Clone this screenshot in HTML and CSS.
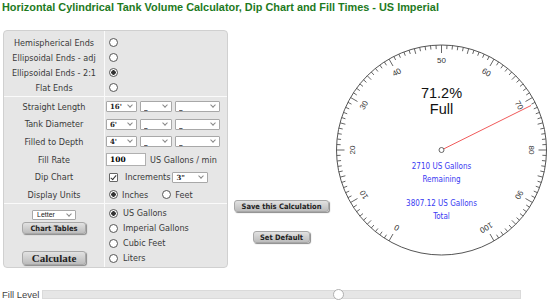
FILE: index.html
```html
<!DOCTYPE html>
<html lang="en">

<head>
    <meta charset="UTF-8">
    <title>Horizontal Cylindrical Tank Volume Calculator</title>
    <link rel="stylesheet" href="styles.css">
</head>

<body>

    <h1 class="title">Horizontal Cylindrical Tank Volume Calculator, Dip Chart and Fill Times - US Imperial</h1>

    <div class="main">
        <div class="panel">
            <div class="section ends">
                <div class="lbl">Hemispherical Ends</div>
                <div class="val"><input type="radio" name="ends"></div>
                <div class="lbl">Ellipsoidal Ends - adj</div>
                <div class="val"><input type="radio" name="ends"></div>
                <div class="lbl">Ellipsoidal Ends - 2:1</div>
                <div class="val"><input type="radio" name="ends" checked></div>
                <div class="lbl">Flat Ends</div>
                <div class="val"><input type="radio" name="ends"></div>
            </div>

            <div class="section dims">
                <div class="lbl">Straight Length</div>
                <div class="val">
                    <span class="sel sel-ft"><select><option>16'</option></select></span>
                    <span class="sel sel-in"><select><option>_</option></select></span>
                    <span class="sel sel-fr"><select><option>_</option></select></span>
                </div>
                <div class="lbl">Tank Diameter</div>
                <div class="val">
                    <span class="sel sel-ft"><select><option>6'</option></select></span>
                    <span class="sel sel-in"><select><option>_</option></select></span>
                    <span class="sel sel-fr"><select><option>_</option></select></span>
                </div>
                <div class="lbl">Filled to Depth</div>
                <div class="val">
                    <span class="sel sel-ft"><select><option>4'</option></select></span>
                    <span class="sel sel-in"><select><option>_</option></select></span>
                    <span class="sel sel-fr"><select><option>_</option></select></span>
                </div>
                <div class="lbl">Fill Rate</div>
                <div class="val">
                    <input type="text" class="rate" value="100">
                    <span class="unit">US Gallons / min</span>
                </div>
                <div class="lbl">Dip Chart</div>
                <div class="val">
                    <input type="checkbox" checked>
                    <span class="incr">Increments</span>
                    <span class="sel sel-inc"><select><option>3"</option></select></span>
                </div>
                <div class="lbl">Display Units</div>
                <div class="val">
                    <input type="radio" name="disp" checked><span class="opt">Inches</span>
                    <input type="radio" name="disp" class="gap"><span class="opt">Feet</span>
                </div>
            </div>

            <div class="section units">
                <div class="lbl actions">
                    <span class="sel sel-paper"><select><option>Letter</option></select></span>
                    <button class="btn btn-chart">Chart Tables</button>
                    <button class="btn btn-calc">Calculate</button>
                </div>
                <div class="val list">
                    <label><input type="radio" name="vol" checked>US Gallons</label>
                    <label><input type="radio" name="vol">Imperial Gallons</label>
                    <label><input type="radio" name="vol">Cubic Feet</label>
                    <label><input type="radio" name="vol">Liters</label>
                </div>
            </div>
        </div>

        <div class="middle">
            <button class="btn btn-save">Save this Calculation</button>
            <button class="btn btn-default">Set Default</button>
        </div>

        <svg class="gauge" width="215" height="240" viewBox="0 0 215 240">
            <circle cx="106.5" cy="122" r="105" fill="none" stroke="#555" stroke-width="1"></circle>
            <g id="ticks" stroke="#555" stroke-width="0.9"></g>
            <g id="labels" class="gauge-num"></g>
            <text x="106.5" y="69.5" class="gauge-big">71.2%</text>
            <text x="106.5" y="86" class="gauge-big">Full</text>
            <line id="needle" x1="106.5" y1="122" x2="196" y2="77.5" stroke="#f05a5a" stroke-width="1"></line>
            <circle cx="106.5" cy="122" r="2.5" fill="#fff" stroke="#555" stroke-width="0.9"></circle>
            <text x="106.5" y="141" class="gauge-info">2710 US Gallons</text>
            <text x="106.5" y="154" class="gauge-info">Remaining</text>
            <text x="106.5" y="178" class="gauge-info">3807.12 US Gallons</text>
            <text x="106.5" y="191" class="gauge-info">Total</text>
        </svg>
    </div>

    <div class="fill-row">
        <span class="fill-label">Fill Level</span>
        <input type="range" class="slider" min="0" max="1000" value="623">
    </div>

    <script>
        // cadran 0..100, 50 en haut, 3 degres par unite
        const cx = 106.5, cy = 122, r = 105;
        const ns = "http://www.w3.org/2000/svg";
        const ticks = document.getElementById("ticks");
        const labels = document.getElementById("labels");

        for (let i = 0; i <= 100; i++) {
            const deg = (i - 50) * 3;
            const a = deg * Math.PI / 180;
            const len = i % 10 === 0 ? 8 : (i % 5 === 0 ? 5.5 : 4);
            const line = document.createElementNS(ns, "line");
            line.setAttribute("x1", cx + r * Math.sin(a));
            line.setAttribute("y1", cy - r * Math.cos(a));
            line.setAttribute("x2", cx + (r - len) * Math.sin(a));
            line.setAttribute("y2", cy - (r - len) * Math.cos(a));
            ticks.appendChild(line);

            if (i % 10 === 0) {
                const lx = cx + 90 * Math.sin(a);
                const ly = cy - 90 * Math.cos(a);
                const t = document.createElementNS(ns, "text");
                t.setAttribute("x", lx);
                t.setAttribute("y", ly + 3);
                t.setAttribute("transform", `rotate(${deg} ${lx} ${ly})`);
                t.textContent = i;
                labels.appendChild(t);
            }
        }
    </script>

</body>

</html>
```

FILE: styles.css
```css
* {
    box-sizing: border-box;
}

body {
    margin: 0;
    font-family: 'DejaVu Sans Condensed', 'DejaVu Sans', sans-serif;
    font-size: 9px;
    color: #3a3a3a;
    background: #fff;
}

.title {
    margin: 0;
    padding: 0 2px;
    height: 14px;
    line-height: 14px;
    font-family: 'Liberation Sans', Arial, sans-serif;
    font-size: 10.9px;
    font-weight: bold;
    color: #1e7a1e;
}

.main {
    display: flex;
    margin-top: 14px;
    height: 240px;
}

/* panneau gris de gauche */
.panel {
    width: 225px;
    height: 238px;
    margin: 2px 0 0 3px;
    border: 1px solid #d0d0d0;
    border-radius: 4px;
    background: linear-gradient(to right, #e6e6e6 100px, #fafafa 100px, #fafafa 101px, #e6e6e6 101px);
    overflow: hidden;
}

.section {
    display: grid;
    grid-template-columns: 101px 1fr;
}

.section + .section {
    border-top: 1px solid #fafafa;
}

.lbl {
    display: flex;
    align-items: center;
    justify-content: center;
    padding-right: 1px;
    white-space: nowrap;
}

.val {
    display: flex;
    align-items: center;
    white-space: nowrap;
}

.ends {
    height: 65px;
    padding-top: 4px;
    grid-auto-rows: 15px;
}

.dims {
    height: 107px;
    padding-top: 1px;
    grid-auto-rows: 17.6px;
}

.units {
    height: 63px;
}

/* radios et case a cocher dessines a la main */
input[type="radio"],
input[type="checkbox"] {
    -webkit-appearance: none;
    appearance: none;
    position: relative;
    width: 9px;
    height: 9px;
    margin: 0 0 0 4px;
    border: 1px solid #555;
    background: #fff;
    flex-shrink: 0;
}

input[type="radio"] {
    border-radius: 50%;
}

input[type="radio"]:checked {
    background: radial-gradient(circle, #333 0, #333 2px, #fff 2.5px);
}

input[type="checkbox"] {
    border-color: #666;
    border-radius: 1px;
}

input[type="checkbox"]:checked::after {
    content: '';
    position: absolute;
    left: 2px;
    top: 0;
    width: 2px;
    height: 5px;
    border-right: 1px solid #333;
    border-bottom: 1px solid #333;
    transform: rotate(40deg);
}

/* listes deroulantes */
.sel {
    position: relative;
    display: inline-block;
    height: 11px;
    margin-right: 3px;
}

.sel::after {
    content: '';
    position: absolute;
    right: 5px;
    top: 2px;
    width: 3px;
    height: 3px;
    border-right: 1px solid #888;
    border-bottom: 1px solid #888;
    transform: rotate(45deg);
    pointer-events: none;
}

select {
    -webkit-appearance: none;
    appearance: none;
    display: block;
    width: 100%;
    height: 11px;
    padding: 0 0 0 3px;
    margin: 0;
    font-family: 'DejaVu Serif', serif;
    font-size: 7px;
    line-height: 9px;
    font-weight: bold;
    color: #222;
    border: 1px solid #a8a8a8;
    border-radius: 1px;
    background: #fff;
}

.sel-ft {
    width: 31px;
    margin-left: 1px;
}

.sel-in {
    width: 32px;
}

.sel-fr {
    width: 45px;
}

.rate {
    width: 40px;
    height: 13px;
    margin: 0 0 0 1px;
    padding: 0 3px;
    font-family: 'DejaVu Serif', serif;
    font-size: 7.5px;
    font-weight: bold;
    border: 1px solid #b0b0b0;
    background: #fff;
}

.unit {
    margin-left: 4px;
}

.incr {
    margin-left: 7px;
    margin-right: 2px;
}

.sel-inc {
    width: 36px;
}

.opt {
    margin-left: 4px;
}

input.gap {
    margin-left: 14px;
}

/* boutons et choix du bas */
.actions {
    flex-direction: column;
    justify-content: flex-start;
    padding-top: 6px;
}

.sel-paper {
    width: 44px;
    height: 10px;
    margin: 0;
}

.sel-paper select {
    height: 10px;
    font-family: 'Liberation Sans', sans-serif;
    font-weight: normal;
    font-size: 7px;
    line-height: 8px;
    padding-left: 4px;
}

.sel-paper::after {
    top: 1.5px;
}

.btn {
    padding: 0;
    font-family: 'DejaVu Sans Condensed', sans-serif;
    font-weight: bold;
    font-size: 7.5px;
    color: #222;
    background: linear-gradient(#e2e2e2, #bcbcbc);
    border: 1px solid #a8a8a8;
    border-radius: 3px;
    box-shadow: 1px 1px 1px #8a8a8a;
    cursor: pointer;
}

.btn-chart {
    width: 64px;
    height: 12px;
    margin-top: 2px;
}

.btn-calc {
    width: 64px;
    height: 14px;
    margin-top: 17px;
    font-family: 'Liberation Serif', serif;
    font-size: 11px;
    line-height: 12px;
}

.list {
    flex-direction: column;
    align-items: flex-start;
    padding-top: 1.5px;
}

.list label {
    display: flex;
    align-items: center;
    height: 15px;
}

.list input[type="radio"] {
    margin-right: 5px;
}

.middle {
    width: 107px;
    display: flex;
    flex-direction: column;
    align-items: center;
    padding-top: 172px;
}

.btn-save {
    width: 95px;
    height: 12px;
}

.btn-default {
    width: 57px;
    height: 12px;
    margin-top: 19px;
}

/* cadran */
.gauge {
    display: block;
}

.gauge-num {
    font-family: 'Liberation Sans', Arial, sans-serif;
    font-size: 8px;
    fill: #333;
    text-anchor: middle;
}

.gauge-big {
    font-family: 'Liberation Sans', Arial, sans-serif;
    font-size: 14.5px;
    fill: #111;
    text-anchor: middle;
}

.gauge-info {
    font-family: 'DejaVu Sans Condensed', sans-serif;
    font-size: 8px;
    fill: #3a3af2;
    text-anchor: middle;
}

/* curseur du bas */
.fill-row {
    display: flex;
    align-items: center;
    margin-top: 20px;
    height: 12px;
    padding-left: 2px;
}

.fill-label {
    font-family: 'Liberation Sans', Arial, sans-serif;
    font-size: 9.5px;
    color: #444;
    width: 40px;
}

.slider {
    -webkit-appearance: none;
    appearance: none;
    width: 479px;
    height: 9px;
    margin: 0;
    background: #e6e6e6;
    border: 1px solid #dadada;
    border-radius: 0;
    outline: none;
}

.slider::-webkit-slider-thumb {
    -webkit-appearance: none;
    width: 11px;
    height: 11px;
    border-radius: 50%;
    background: #fff;
    border: 1px solid #b0b0b0;
}
```
